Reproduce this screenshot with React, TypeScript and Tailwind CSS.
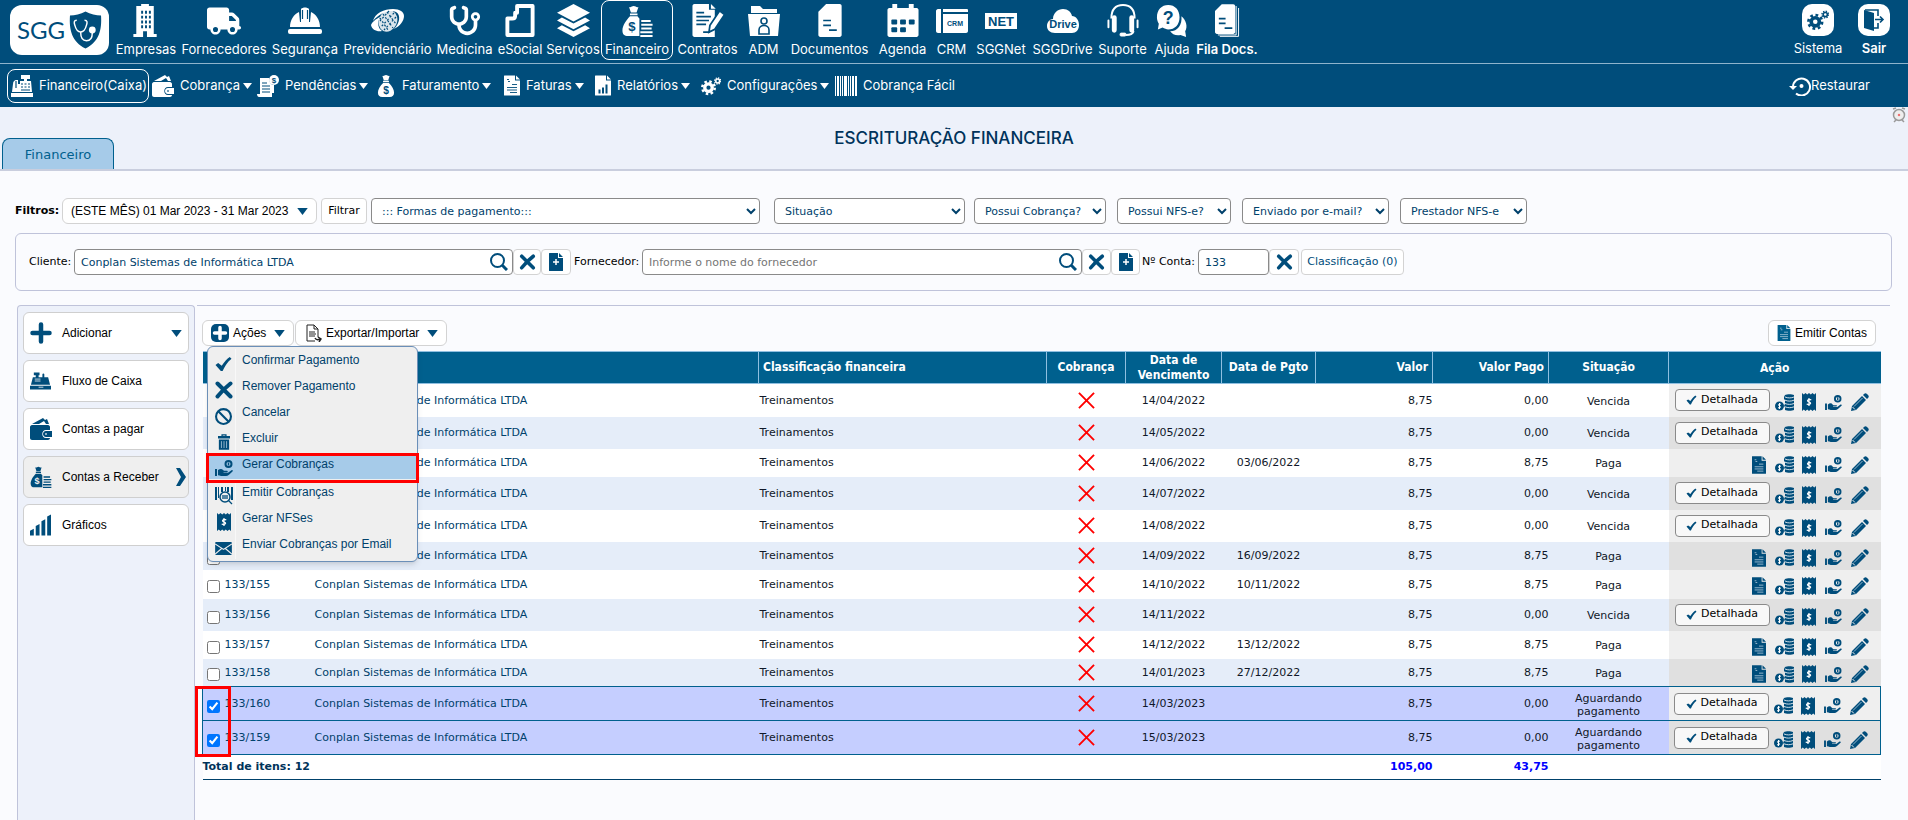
import React, { useState } from "react";
import { FaBan, FaStethoscope, FaTruck } from "react-icons/fa6";

type IconProps = { className?: string };

/* ---------- Icons ---------- */

function BuildingIcon({ className }: IconProps) {
  return (
    <svg viewBox="0 0 28 34" className={className} fill="currentColor">
      <path
        fillRule="evenodd"
        d="M6 2h3V0h8v2h5v29h3v3H15v-6h-4v6H1v-3h3V2zM9 7v3h2V7zm4 0v3h2V7zm4 0v3h2V7zM9 12v3h2v-3zm4 0v3h2v-3zm4 0v3h2v-3zM9 17v3h2v-3zm4 0v3h2v-3zm4 0v3h2v-3zM9 22v3h2v-3zm4 0v3h2v-3zm4 0v3h2v-3z"
      />
    </svg>
  );
}

function HelmetIcon({ className }: IconProps) {
  return (
    <svg viewBox="0 0 34 28" className={className} fill="currentColor">
      <path d="M2 20c0-7 4-13 9-15l1 10h1V2c2-2 6-2 8 0v13h1l1-10c5 2 9 8 9 15z" />
      <path d="M14.500 3v9M19.500 3v9" stroke="#004d7b" strokeWidth="1.200" />
      <rect y="22" width="34" height="5" rx="2" />
    </svg>
  );
}

function SocialSecurityIcon({ className }: IconProps) {
  return (
    <svg viewBox="0 0 34 24" className={className} fill="currentColor">
      <path d="M2 12C4 4 13 0 22 0c7 0 11 3 11 7 0 5-4 10-10 13 6-6 7-14 2-17C18 0 8 5 2 12z" />
      <path d="M0 16c1 5 6 7 11 6-4-3-5-8-2-14-4 2-8 5-9 8z" />
      <ellipse cx="17" cy="12" rx="9" ry="11" transform="rotate(25 17 12)" opacity="0.85" />
      <g stroke="#004d7b" strokeWidth="1.2" strokeDasharray="2 2" fill="none">
        <path d="M12 5l10 14M16 3l9 12M9 9l8 12M23 4L10 18M25 8L13 21M18 2L9 12" />
      </g>
    </svg>
  );
}

function ESocialIcon({ className }: IconProps) {
  return (
    <svg viewBox="0 0 30 34" className={className} fill="none" stroke="currentColor" strokeWidth="4">
      <path d="M12 2h16v30H2V15h5c2 0 3-1 3-3V9h2z" strokeLinejoin="round" />
    </svg>
  );
}

function LayersIcon({ className }: IconProps) {
  return (
    <svg viewBox="0 0 34 34" className={className} fill="currentColor">
      <path d="M17 0l17 9-17 9L0 9zM5 14l12 6 12-6 5 3-17 9-17-9zM5 22l12 6 12-6 5 3-17 9-17-9z" />
    </svg>
  );
}

function GearsIcon({ className }: IconProps) {
  return (
    <svg viewBox="0 0 24 22" className={className} fill="none" stroke="currentColor">
      <circle cx="9" cy="13" r="4.500" strokeWidth="4" />
      <circle cx="9" cy="13" r="7.500" strokeWidth="3" strokeDasharray="3 2.890" />
      <circle cx="20" cy="5" r="2.300" strokeWidth="1.800" />
      <circle cx="20" cy="5" r="3.700" strokeWidth="1.500" strokeDasharray="1.500 1.406" />
    </svg>
  );
}

function MoneyBagIcon({ className }: IconProps) {
  return (
    <svg viewBox="0 0 22 30" className={className} fill="currentColor">
      <path d="M6 1c2 1 3-1 5-1s3 2 5 1l-2 6H8zM7 8h8v2H7zM7 11h8c4 4 7 9 7 13 0 4-2 6-6 6H6c-4 0-6-2-6-6 0-4 3-9 7-13z" />
      <text x="11" y="26" fontSize="14" fontWeight="700" textAnchor="middle" fill="#004d7b" fontFamily="Liberation Sans, sans-serif">
        $
      </text>
    </svg>
  );
}

function BagCoinsIcon({ className, mark = "#004d7b" }: IconProps & { mark?: string }) {
  return (
    <svg viewBox="0 0 32 34" className={className} fill="currentColor">
      <path d="M7 2c2 1 3-1 5-1s3 2 5 1l-2 6H9zM8 9h8v2H8zM8 12h8l4 5v16H6c-4 0-6-2-6-6 0-5 4-11 8-15z" />
      <text x="10" y="28" fontSize="14" fontWeight="700" textAnchor="middle" fill={mark} fontFamily="Liberation Sans, sans-serif">
        $
      </text>
      <path d="M18 15h14v19H18z" fill={mark} />
      <path d="M20 16h10v2H20zM20 20h12v2H20zM20 24h11v2H20zM19 28h13v2H19zM19 32h13v2H19z" />
    </svg>
  );
}

function ContractIcon({ className }: IconProps) {
  return (
    <svg viewBox="0 0 32 34" className={className} fill="currentColor">
      <path d="M2 0h15v6h6v28H2C1 34 0 33 0 32V2c0-1 1-2 2-2zM19 0l5 5h-5z" />
      <path d="M4 9h8M4 13h15M4 17h13M4 21h10M11 29h7" stroke="#004d7b" strokeWidth="1.8" />
      <path d="M28 7l5 4-10 15-6 3 1-7z" stroke="#004d7b" strokeWidth="1.8" />
    </svg>
  );
}

function FolderUserIcon({ className }: IconProps) {
  return (
    <svg viewBox="0 0 32 30" className={className} fill="currentColor">
      <path d="M3 0h9l3 3h14v4H3zM0 8h32l-2 22H2z" />
      <g fill="none" stroke="#004d7b" strokeWidth="1.6">
        <circle cx="16" cy="15" r="3" />
        <path d="M11 28v-4c0-6 10-6 10 0v4z" />
      </g>
    </svg>
  );
}

function DocumentIcon({ className }: IconProps) {
  return (
    <svg viewBox="0 0 24 34" className={className} fill="currentColor">
      <path d="M8 0h14c1 0 2 1 2 2v30c0 1-1 2-2 2H2c-1 0-2-1-2-2V8z" />
      <path d="M5 17h8M5 22h8M11 27h8" stroke="#004d7b" strokeWidth="1.8" />
    </svg>
  );
}

function CalendarIcon({ className }: IconProps) {
  return (
    <svg viewBox="0 0 32 34" className={className} fill="currentColor">
      <path d="M5 0h5v4h12V0h5v4h3c1 0 2 1 2 2v26c0 1-1 2-2 2H2c-1 0-2-1-2-2V6c0-1 1-2 2-2h3z" />
      <g fill="#004d7b">
        <rect x="4" y="16" width="6" height="5" rx="1" />
        <rect x="13" y="16" width="6" height="5" rx="1" />
        <rect x="22" y="16" width="6" height="5" rx="1" />
        <rect x="4" y="24" width="6" height="5" rx="1" />
        <rect x="13" y="24" width="6" height="5" rx="1" />
      </g>
    </svg>
  );
}

function CrmIcon({ className }: IconProps) {
  return (
    <svg viewBox="0 0 32 24" className={className} fill="currentColor">
      <path d="M2 0h3v24H2c-1 0-2-1-2-2V2c0-1 1-2 2-2zM7 0h24c1 0 1 1 1 1v2H7zM7 5h25v17c0 1-1 2-2 2H7z" />
      <text x="19" y="17" fontSize="7" fontWeight="700" textAnchor="middle" fill="#004d7b" fontFamily="Liberation Sans, sans-serif">
        CRM
      </text>
    </svg>
  );
}

function NetIcon({ className }: IconProps) {
  return (
    <svg viewBox="0 0 32 16" className={className} fill="currentColor">
      <rect width="32" height="16" />
      <text x="16" y="13" fontSize="13" fontWeight="700" textAnchor="middle" fill="#004d7b" fontFamily="Liberation Sans, sans-serif">
        NET
      </text>
    </svg>
  );
}

function DriveIcon({ className }: IconProps) {
  return (
    <svg viewBox="0 0 32 24" className={className} fill="currentColor">
      <path d="M8 24c-5 0-8-3-8-7s3-7 6-7c0-6 5-10 10-10s8 3 9 7c4 0 7 4 7 9 0 5-3 8-7 8z" />
      <text x="16" y="19" fontSize="11" fontWeight="700" textAnchor="middle" fill="#004d7b" fontFamily="Liberation Sans, sans-serif">
        Drive
      </text>
    </svg>
  );
}

function HeadsetIcon({ className }: IconProps) {
  return (
    <svg viewBox="0 0 34 34" className={className} fill="none" stroke="currentColor">
      <path d="M5 15C5 5 10 1 17 1s12 4 12 14" strokeWidth="2" />
      <path d="M8 14v13M26 14v13" strokeWidth="5" strokeLinecap="round" />
      <path d="M2 17v7M32 17v7" strokeWidth="2" strokeLinecap="round" />
      <path d="M28 28c-1 3-4 4-8 4" strokeWidth="2" />
      <rect x="14" y="30" width="6" height="3" rx="1" fill="currentColor" />
    </svg>
  );
}

function HelpIcon({ className }: IconProps) {
  return (
    <svg viewBox="0 0 32 34" className={className} fill="currentColor">
      <path d="M26 12c5 4 7 11 4 16l1 6-6-2c-5 1-9-1-11-4 8 0 13-7 12-16z" />
      <path d="M12 0c7 0 12 5 12 13s-5 13-12 13c-2 0-4-1-6-2l-5 2 1-6c-1-2-2-4-2-7C0 5 5 0 12 0z" />
      <text x="12" y="20" fontSize="19" fontWeight="700" textAnchor="middle" fill="#004d7b" fontFamily="Liberation Sans, sans-serif">
        ?
      </text>
    </svg>
  );
}

function DocsQueueIcon({ className }: IconProps) {
  return (
    <svg viewBox="0 0 26 34" className={className} fill="currentColor">
      <path d="M7 0h12c1 0 2 1 2 2v27c0 1-1 2-2 2H2c-1 0-2-1-2-2V7z" />
      <path d="M22 2v30H3M24.500 4v29.500H5" fill="none" stroke="currentColor" />
      <path d="M4 15h7M4 20h7M10 25h8" stroke="#004d7b" strokeWidth="1.8" />
    </svg>
  );
}

function CashRegisterIcon({ className }: IconProps) {
  return (
    <svg viewBox="0 0 22 22" className={className} fill="currentColor">
      <path d="M10 0h9v4h-3v2h4l1 11H1l1-8c0-3 2-4 3-4h2v4h2V6h4V4h-3zM0 18h22v4H0z" />
      <path d="M5 6v7M10 9h2M13.500 9h2M17 9h2M10 12h2M13.500 12h2M17 12h2M10 15h9" stroke="#004d7b" strokeWidth="1.2" />
    </svg>
  );
}

function TillIcon({ className }: IconProps) {
  return (
    <svg viewBox="0 0 22 18" className={className} fill="currentColor">
      <path d="M4 0h6v3H9v2h4V2c0-1 2-1 2 0v3h4l2 8H1l2-8h3V3H4zM0 14h22v4H0z" />
      <path d="M5 7h6M5 9h6M9 15.500h5" stroke="#fff" strokeWidth="0.800" />
    </svg>
  );
}

function WalletIcon({ className }: IconProps) {
  return (
    <svg viewBox="0 0 22 22" className={className} fill="currentColor">
      <path d="M2 6L13 0l2 2 2-1 2 5h-3l-2-3-5 3z" />
      <path d="M2 7h16c1 0 2 1 2 2v3h-4c-5 0-5 8 0 8h4c0 1-1 2-2 2H2c-1 0-2-1-2-2V9c0-1 1-2 2-2z" />
      <path d="M16 13h6v6h-6c-4 0-4-6 0-6zm0 2c-1 0-1 2 0 2s1-2 0-2z" fillRule="evenodd" />
    </svg>
  );
}

function PendingIcon({ className }: IconProps) {
  return (
    <svg viewBox="0 0 22 22" className={className} fill="currentColor">
      <path d="M3 3h9c0 4 2 7 5 7v8h-2v4H2c-1 0-2-1-2-3h3z" />
      <circle cx="17" cy="5" r="5" />
      <path d="M5 8h5M5 11h8M5 14h8M5 17h8" stroke="#004d7b" />
      <text x="17" y="8" fontSize="8" fontWeight="700" textAnchor="middle" fill="#004d7b" fontFamily="Liberation Sans, sans-serif">
        $
      </text>
    </svg>
  );
}

function InvoiceIcon({ className, mark = "#b8d0e0" }: IconProps & { mark?: string }) {
  return (
    <svg viewBox="0 0 16 20" className={className} fill="currentColor">
      <path d="M1 0h10v5h5v14c0 1 0 1-1 1H1c-1 0-1 0-1-1V1c0-1 0-1 1-1zM12 0l4 4h-4z" />
      <path d="M3 4h2M4 6h2M8 9h5M3 12h10M3 14.500h10M6 17h7" stroke={mark} strokeWidth="0.900" />
    </svg>
  );
}

function ReportIcon({ className }: IconProps) {
  return (
    <svg viewBox="0 0 16 20" className={className} fill="currentColor">
      <path d="M1 0h10v5h5v14c0 1 0 1-1 1H1c-1 0-1 0-1-1V1c0-1 0-1 1-1zM12 0l4 4h-4z" />
      <path d="M4.500 18v-4M8 18v-6M11.500 18V9" stroke="#004d7b" strokeWidth="2" />
    </svg>
  );
}

function BarcodeIcon({ className }: IconProps) {
  return (
    <svg viewBox="0 0 22 20" className={className} fill="currentColor">
      <path d="M0 0h1v20H0zM2 0h2v20H2zM5 0h1v20H5zM7 0h1v20H7zM9 0h3v20H9zM13 0h1v20h-1zM15 0h1v20h-1zM17 0h2v20h-2zM20 0h2v20h-2z" />
    </svg>
  );
}

function RestoreIcon({ className }: IconProps) {
  return (
    <svg viewBox="0 0 22 20" className={className} fill="none" stroke="currentColor" strokeWidth="2">
      <path d="M4 11a8.500 8.500 0 1 1 3 6.500" />
      <path d="M0 10h8l-4 4z" fill="currentColor" stroke="none" />
      <circle cx="12.500" cy="10" r="2" fill="currentColor" stroke="none" />
    </svg>
  );
}

function ExitIcon({ className }: IconProps) {
  return (
    <svg viewBox="0 0 22 22" className={className} fill="currentColor">
      <path d="M1 1l10 3v18L1 19z" />
      <path d="M2 1h13v6M15 14v5h-4M12 10.500h8M17 7.500l3 3-3 3" fill="none" stroke="currentColor" strokeWidth="1.600" />
    </svg>
  );
}

function ClockIcon({ className }: IconProps) {
  return (
    <svg viewBox="0 0 14 16" className={className} fill="none" stroke="#9a9a9a">
      <path d="M1 2l3-1M13 2l-3-1M2 15l2-2M12 15l-2-2" strokeWidth="1.500" />
      <circle cx="7" cy="8" r="5.500" fill="#eee" strokeWidth="1.500" />
      <circle cx="7" cy="8" r="0.800" fill="#e33" stroke="#e66" />
    </svg>
  );
}

function PlusIcon({ className }: IconProps) {
  return (
    <svg viewBox="0 0 22 22" className={className} fill="none" stroke="currentColor" strokeWidth="4.500" strokeLinecap="round">
      <path d="M11 2.500v17M2.500 11h17" />
    </svg>
  );
}

function CheckIcon({ className }: IconProps) {
  return (
    <svg viewBox="0 0 18 18" className={className} fill="currentColor">
      <path d="M0 10l3-2 4 3c3-5 6-8 9-10l2 2C13 7 10 12 8 17H6z" />
    </svg>
  );
}

function CrossIcon({ className }: IconProps) {
  return (
    <svg viewBox="0 0 18 18" className={className} fill="none" stroke="currentColor" strokeWidth="4" strokeLinecap="round">
      <path d="M2.500 2.500c3 3 8 8 13 13M15.500 2.500C11 6 6 11 2.500 15.500" />
    </svg>
  );
}

function TrashIcon({ className }: IconProps) {
  return (
    <svg viewBox="0 0 14 18" className={className} fill="currentColor">
      <path d="M4 0h6v2h4v3H0V2h4zM5.500 1.500V2h3v-.5zM1 6h12v12H1z" fillRule="evenodd" />
      <path d="M4 8v8M7 8v8M10 8v8" stroke="#b8d0e0" strokeWidth="0.900" />
    </svg>
  );
}

function MailIcon({ className }: IconProps) {
  return (
    <svg viewBox="0 0 18 14" className={className}>
      <rect width="18" height="14" rx="1" fill="currentColor" />
      <path d="M0 2l9 6 9-6M0 13l7-6M18 13l-7-6" fill="none" stroke="#efefef" strokeWidth="1.200" />
    </svg>
  );
}

function RedCrossIcon({ className }: IconProps) {
  return (
    <svg viewBox="0 0 18 18" className={className} fill="none" stroke="#ff0000" strokeWidth="2">
      <path d="M1 1l16 16M17 1L1 17" />
    </svg>
  );
}

function SearchIcon({ className }: IconProps) {
  return (
    <svg viewBox="0 0 18 18" className={className} fill="none" stroke="currentColor" strokeWidth="2">
      <circle cx="7.500" cy="7.500" r="6.500" />
      <path d="M12 12l5 5" strokeWidth="3" />
    </svg>
  );
}

function NewDocIcon({ className }: IconProps) {
  return (
    <svg viewBox="0 0 14 18" className={className} fill="currentColor">
      <path d="M1 0h8v5h5v12c0 1 0 1-1 1H1c-1 0-1 0-1-1V1c0-1 0-1 1-1zM10 0l4 4h-4z" />
      <path d="M7 6v6M4 9h6" stroke="#fff" strokeWidth="1.500" />
    </svg>
  );
}

function PlusBoxIcon({ className }: IconProps) {
  return (
    <svg viewBox="0 0 18 18" className={className}>
      <rect width="18" height="18" rx="5" fill="currentColor" />
      <path d="M9 3.500v11M3.500 9h11" stroke="#fff" strokeWidth="3.500" strokeLinecap="round" />
    </svg>
  );
}

function ExportIcon({ className }: IconProps) {
  return (
    <svg viewBox="0 0 16 18" className={className} fill="none" stroke="#222">
      <path d="M9 17H1V1h7l4 4v8M8 1v4h4M3 8h6M3 10h7M3 12h6" />
      <path d="M9 14c1 2 3 2 5 1M12 13l3 2-2 3" strokeWidth="1.500" />
    </svg>
  );
}

function BarsIcon({ className }: IconProps) {
  return (
    <svg viewBox="0 0 22 22" className={className} fill="currentColor">
      <path d="M0 17l4-2v7H0zM6 12l4-2v12H6zM12 7l4-2v17h-4zM18 2l4-2v22h-4z" />
    </svg>
  );
}

function HandCoinIcon({ className }: IconProps) {
  return (
    <svg viewBox="0 0 18 16" className={className} fill="currentColor">
      <path d="M0 9h2v7H0zM3 10c2-1.500 4-1.500 5 0l1 .8h3c1 0 1 1.400 0 1.400H8.500v.6H13l3.500-2.600c1-.5 1.800.5 1 1.300L14 14.700c-1 .9-2 1.300-3 1.300H6c-1 0-2-.7-3-.7z" />
      <circle cx="13.500" cy="4" r="3" fill="none" stroke="currentColor" strokeWidth="2" />
      <path d="M13.500 2.500v3" stroke="currentColor" strokeWidth="1.400" />
    </svg>
  );
}

function CoinStackIcon({ className }: IconProps) {
  return (
    <svg viewBox="0 0 19 17" className={className} fill="currentColor">
      <circle cx="4.500" cy="12" r="4.500" />
      <path d="M6 10.300c-2.300-1-3.500 1-1.500 1.700s1 2.600-1.500 1.700M4.500 9v6" stroke="#fff" fill="none" strokeWidth="1" />
      <path d="M10 1c2-1 7-1 9 0v15c-2 1-7 1-9 0v-3l-1-1 1-2V6L9 5V3z" />
      <path d="M10 3c3 1.200 6 1.200 9 0M10 6.200c3 1.200 6 1.200 9 0M10 9.500c3 1.200 6 1.200 9 0M10 12.800c3 1.200 6 1.200 9 0" stroke="#e8eef3" strokeWidth="0.900" fill="none" />
    </svg>
  );
}

function ReceiptIcon({ className }: IconProps) {
  return (
    <svg viewBox="0 0 14 18" className={className} fill="currentColor">
      <path d="M0 0l1.750 1.500L3.500 0l1.750 1.500L7 0l1.750 1.500L10.500 0l1.750 1.500L14 0v18l-1.750-1.500L10.500 18l-1.750-1.500L7 18l-1.750-1.500L3.500 18l-1.750-1.500L0 18z" />
      <path d="M9.300 7c-3-1.500-5.500 1.100-2.300 2s1 3.500-2.300 2M7 5v8" stroke="#fff" fill="none" strokeWidth="1.200" />
    </svg>
  );
}

function PencilIcon({ className }: IconProps) {
  return (
    <svg viewBox="0 0 18 18" className={className} fill="currentColor">
      <path d="M13 1c1-1 2-1 3 0l1 1c1 1 1 2 0 3l-1 1-4-4zM11 3l4 4L5 17l-5 1 1-5z" />
      <path d="M11.500 5L3 13.500" stroke="#b8d0e0" strokeWidth="0.800" />
      <path d="M1.500 14l2.500 2.500" stroke="#efefef" />
    </svg>
  );
}

function BarcodeSearchIcon({ className }: IconProps) {
  return (
    <svg viewBox="0 0 18 18" className={className} fill="currentColor">
      <path d="M0 0h2v13H0zM3 0h1v11H3zM6 0h2v5H6zM10 0h1v4h-1zM12 0h2v5h-2zM16 0h2v13h-2z" />
      <circle cx="10" cy="10" r="5" fill="none" stroke="currentColor" strokeWidth="1.500" />
      <path d="M8 8v4M10 8v4M12 8v4M13.500 13.500L17 17" stroke="currentColor" strokeWidth="1.300" />
    </svg>
  );
}

function Caret({ className = "" }: IconProps) {
  return (
    <svg viewBox="0 0 12 8" className={`shrink-0 ${className}`} fill="currentColor">
      <path d="M0 0h12L6 8z" />
    </svg>
  );
}

function Logo() {
  return (
    <a href="#" className="flex h-[50px] w-[99px] items-center justify-center gap-1 rounded-xl bg-white">
      <span className="font-[Lato,sans-serif] text-2xl text-[#004d7b]">SGG</span>
      <svg viewBox="0 0 34 38" className="h-[38px] w-[33px]">
        <path d="M17 0c5 3 11 4 16 4 1 15-2 27-16 34C3 31 0 19 1 4 6 4 12 3 17 0z" fill="#004d7b" />
        <g fill="none" stroke="#fff" strokeWidth="1.500">
          <path d="M8 9c-3 0-3 2-2 5 1 4 3 7 6 7s5-3 6-7c1-3 1-5-2-5" />
          <path d="M12 21c0 6 2 9 6 9s6-3 6-8" />
        </g>
        <circle cx="24" cy="19" r="3.500" fill="#fff" />
      </svg>
    </a>
  );
}

/* ---------- Data ---------- */

const modules = [
  { label: "Empresas", width: "w-[66px]", icon: <BuildingIcon className="h-[33px] w-7" /> },
  { label: "Fornecedores", width: "w-[90px]", icon: <FaTruck className="h-7 w-[34px]" /> },
  { label: "Segurança", width: "w-[72px]", icon: <HelmetIcon className="h-7 w-[34px]" /> },
  { label: "Previdenciário", width: "w-[93px]", icon: <SocialSecurityIcon className="h-6 w-[34px]" /> },
  { label: "Medicina", width: "w-[61px]", icon: <FaStethoscope className="h-[33px] w-[33px]" /> },
  { label: "eSocial", width: "w-[50px]", icon: <ESocialIcon className="h-[33px] w-[30px]" /> },
  { label: "Serviços", width: "w-[56px]", icon: <LayersIcon className="h-[33px] w-[33px]" /> },
  { label: "Financeiro", width: "w-[72px]", icon: <BagCoinsIcon className="h-8 w-[31px]" />, active: true },
  { label: "Contratos", width: "w-[69px]", icon: <ContractIcon className="h-[33px] w-8" /> },
  { label: "ADM", width: "w-[43px]", icon: <FolderUserIcon className="h-[30px] w-8" /> },
  { label: "Documentos", width: "w-[89px]", icon: <DocumentIcon className="h-[33px] w-6" /> },
  { label: "Agenda", width: "w-[57px]", icon: <CalendarIcon className="h-[33px] w-8" /> },
  { label: "CRM", width: "w-[41px]", icon: <CrmIcon className="h-6 w-8" /> },
  { label: "SGGNet", width: "w-[58px]", icon: <NetIcon className="h-4 w-8" /> },
  { label: "SGGDrive", width: "w-[65px]", icon: <DriveIcon className="h-6 w-8" /> },
  { label: "Suporte", width: "w-[55px]", icon: <HeadsetIcon className="h-[33px] w-[34px]" /> },
  { label: "Ajuda", width: "w-[44px]", icon: <HelpIcon className="h-8 w-8" /> },
  { label: "Fila Docs.", width: "w-[66px]", icon: <DocsQueueIcon className="h-[33px] w-[25px]" />, bold: true },
];

const submenus = [
  { label: "Cobrança", width: "w-[105px]", icon: <WalletIcon className="h-[22px] w-[22px]" />, caret: true },
  { label: "Pendências", width: "w-[119px]", icon: <PendingIcon className="h-[22px] w-[22px]" />, caret: true },
  { label: "Faturamento", width: "w-32", icon: <MoneyBagIcon className="h-[22px] w-5" />, caret: true },
  { label: "Faturas", width: "w-[91px]", icon: <InvoiceIcon className="h-[21px] w-4" mark="#004d7b" />, caret: true },
  { label: "Relatórios", width: "w-[106px]", icon: <ReportIcon className="h-[21px] w-4" />, caret: true },
  { label: "Configurações", width: "w-[134px]", icon: <GearsIcon className="h-5 w-5" />, caret: true },
  { label: "Cobrança Fácil", width: "w-32", icon: <BarcodeIcon className="h-5 w-[22px]" /> },
];

const sideItems = [
  { label: "Adicionar", icon: <PlusIcon className="h-[22px] w-[22px]" />, caret: true },
  { label: "Fluxo de Caixa", icon: <TillIcon className="h-[18px] w-[21px]" /> },
  { label: "Contas a pagar", icon: <WalletIcon className="h-[22px] w-[22px]" /> },
  { label: "Contas a Receber", icon: <BagCoinsIcon className="h-[22px] w-[22px]" mark="#efefef" />, active: true },
  { label: "Gráficos", icon: <BarsIcon className="h-[22px] w-[21px]" /> },
];

const menuItems = [
  { label: "Confirmar Pagamento", icon: <CheckIcon className="h-4 w-[17px]" /> },
  { label: "Remover Pagamento", icon: <CrossIcon className="h-[18px] w-[18px]" /> },
  { label: "Cancelar", icon: <FaBan className="h-[17px] w-[17px]" /> },
  { label: "Excluir", icon: <TrashIcon className="h-[18px] w-3" /> },
  { label: "Gerar Cobranças", icon: <HandCoinIcon className="h-4 w-[18px]" />, highlighted: true },
  { label: "Emitir Cobranças", icon: <BarcodeSearchIcon className="h-[18px] w-[18px]" /> },
  { label: "Gerar NFSes", icon: <ReceiptIcon className="h-[18px] w-[14px]" /> },
  { label: "Enviar Cobranças por Email", icon: <MailIcon className="h-[13px] w-[17px]" /> },
];

interface Entry {
  id?: string;
  due: string;
  paidOn?: string;
  paid: string;
  status: "Vencida" | "Paga" | "Aguardando pagamento";
  height: string;
}

const entries: Entry[] = [
  { due: "14/04/2022", paid: "0,00", status: "Vencida", height: "h-[33px]" },
  { due: "14/05/2022", paid: "0,00", status: "Vencida", height: "h-8" },
  { due: "14/06/2022", paidOn: "03/06/2022", paid: "8,75", status: "Paga", height: "h-7" },
  { due: "14/07/2022", paid: "0,00", status: "Vencida", height: "h-[33px]" },
  { due: "14/08/2022", paid: "0,00", status: "Vencida", height: "h-8" },
  { due: "14/09/2022", paidOn: "16/09/2022", paid: "8,75", status: "Paga", height: "h-7" },
  { id: "133/155", due: "14/10/2022", paidOn: "10/11/2022", paid: "8,75", status: "Paga", height: "h-[29px]" },
  { id: "133/156", due: "14/11/2022", paid: "0,00", status: "Vencida", height: "h-8" },
  { id: "133/157", due: "14/12/2022", paidOn: "13/12/2022", paid: "8,75", status: "Paga", height: "h-7" },
  { id: "133/158", due: "14/01/2023", paidOn: "27/12/2022", paid: "8,75", status: "Paga", height: "h-7" },
  { id: "133/160", due: "14/03/2023", paid: "0,00", status: "Aguardando pagamento", height: "h-[34px]" },
  { id: "133/159", due: "15/03/2023", paid: "0,00", status: "Aguardando pagamento", height: "h-[34px]" },
];

/* ---------- Header ---------- */

function Header() {
  return (
    <header className="bg-[#004d7b] font-[Inter,sans-serif] text-[13px] text-white">
      <div className="flex h-16 items-start border-b border-[#8fb4cc] pl-2.5">
        <div className="pt-[5px]">
          <Logo />
        </div>
        <nav className="ml-1 flex">
          {modules.map((m) => (
            <a
              key={m.label}
              href="#"
              className={`flex h-[60px] shrink-0 flex-col items-center rounded-lg border pt-[3px] whitespace-nowrap ${m.width} ${
                m.active ? "border-white" : "border-transparent"
              } ${m.bold ? "font-semibold" : ""}`}
            >
              <span className="flex h-[33px] items-center">{m.icon}</span>
              <span className="mt-1 leading-4">{m.label}</span>
            </a>
          ))}
        </nav>
        <div className="mr-[19px] ml-auto flex gap-[13px] pt-1">
          <a href="#" className="flex w-[56px] flex-col items-center">
            <span className="flex h-8 w-8 items-center justify-center rounded-[10px] bg-white text-[#004d7b]">
              <GearsIcon className="h-5 w-[22px]" />
            </span>
            <span className="mt-1 leading-4">Sistema</span>
          </a>
          <a href="#" className="flex w-[30px] flex-col items-center font-semibold">
            <span className="flex h-8 w-8 items-center justify-center rounded-[10px] bg-white text-[#004d7b]">
              <ExitIcon className="h-[22px] w-[22px]" />
            </span>
            <span className="mt-1 leading-4">Sair</span>
          </a>
        </div>
      </div>
      <div className="flex h-[43px] items-center pl-[7px]">
        <a href="#" className="mr-[3px] flex h-[34px] w-[142px] items-center gap-1.5 rounded-lg border border-white pl-[3px]">
          <CashRegisterIcon className="h-[22px] w-[22px] shrink-0" />
          Financeiro(Caixa)
        </a>
        {submenus.map((s) => (
          <a key={s.label} href="#" className={`flex shrink-0 items-center whitespace-nowrap ${s.width}`}>
            {s.icon}
            <span className="ml-1.5">{s.label}</span>
            {s.caret && <Caret className="ml-[3px] h-1.5 w-[9px]" />}
          </a>
        ))}
        <a href="#" className="mr-[38px] ml-auto flex items-center">
          <RestoreIcon className="h-5 w-[22px]" />
          Restaurar
        </a>
      </div>
    </header>
  );
}

/* ---------- Filters ---------- */

const selectClass =
  "h-[26px] rounded border border-[#8a8a8a] bg-white pr-1 pl-1.5 text-[11px] text-[#00416b]";
const iconButton =
  "flex h-[26px] items-center justify-center rounded border border-[#d3d3d3] bg-white text-[#004d7b]";

function Filters() {
  return (
    <>
      <div className="mt-[27px] flex items-center pl-[15px] text-[11px] text-black">
        <span className="w-[47px] font-bold">Filtros:</span>
        <button className="flex h-[26px] w-[255px] items-center justify-between rounded-md border border-[#d3d3d3] bg-white px-2 font-['Liberation_Sans',sans-serif] text-[12px]">
          (ESTE MÊS) 01 Mar 2023 - 31 Mar 2023
          <Caret className="h-[7px] w-[11px] text-[#004d7b]" />
        </button>
        <button className="ml-1 h-[26px] w-[46px] rounded border border-[#d3d3d3] bg-white">Filtrar</button>
        <select aria-label="Formas de pagamento" className={`${selectClass} ml-1 w-[389px]`}>
          <option>::: Formas de pagamento:::</option>
        </select>
        <select aria-label="Situação" className={`${selectClass} ml-[14px] w-[191px]`}>
          <option>Situação</option>
        </select>
        <select aria-label="Possui Cobrança?" className={`${selectClass} ml-[9px] w-[132px]`}>
          <option>Possui Cobrança?</option>
        </select>
        <select aria-label="Possui NFS-e?" className={`${selectClass} ml-[11px] w-[114px]`}>
          <option>Possui NFS-e?</option>
        </select>
        <select aria-label="Enviado por e-mail?" className={`${selectClass} ml-[11px] w-[147px]`}>
          <option>Enviado por e-mail?</option>
        </select>
        <select aria-label="Prestador NFS-e" className={`${selectClass} ml-[11px] w-[127px]`}>
          <option>Prestador NFS-e</option>
        </select>
      </div>

      <div className="mt-[9px] mr-4 ml-[15px] flex h-[58px] items-center rounded-md border border-[#bfc3da] pl-[13px] text-[11px] text-black">
        <label htmlFor="cliente" className="w-[45px]">
          Cliente:
        </label>
        <div className="relative w-[439px]">
          <input
            id="cliente"
            defaultValue="Conplan Sistemas de Informática LTDA"
            className="h-[26px] w-full rounded border border-[#8a8a8a] bg-white pr-7 pl-1.5 text-[#00416b]"
          />
          <button aria-label="Pesquisar cliente" className="absolute top-1 right-[5px] text-[#004d7b]">
            <SearchIcon className="h-[18px] w-[18px]" />
          </button>
        </div>
        <button aria-label="Limpar cliente" className={`${iconButton} w-[28px]`}>
          <CrossIcon className="h-4 w-[17px]" />
        </button>
        <button aria-label="Novo cliente" className={`${iconButton} w-[30px]`}>
          <NewDocIcon className="h-[18px] w-[14px]" />
        </button>
        <label htmlFor="fornecedor" className="ml-[3px] w-[68px]">
          Fornecedor:
        </label>
        <div className="relative w-[440px]">
          <input
            id="fornecedor"
            placeholder="Informe o nome do fornecedor"
            className="h-[26px] w-full rounded border border-[#8a8a8a] bg-white pr-7 pl-1.5 placeholder:text-[#757575]"
          />
          <button aria-label="Pesquisar fornecedor" className="absolute top-1 right-[5px] text-[#004d7b]">
            <SearchIcon className="h-[18px] w-[18px]" />
          </button>
        </div>
        <button aria-label="Limpar fornecedor" className={`${iconButton} w-[29px]`}>
          <CrossIcon className="h-4 w-[17px]" />
        </button>
        <button aria-label="Novo fornecedor" className={`${iconButton} w-[29px]`}>
          <NewDocIcon className="h-[18px] w-[14px]" />
        </button>
        <label htmlFor="conta" className="ml-[2px] w-[56px] whitespace-nowrap">
          Nº Conta:
        </label>
        <input
          id="conta"
          defaultValue="133"
          className="h-[26px] w-[71px] rounded border border-[#8a8a8a] bg-white px-1.5 text-[#00416b]"
        />
        <button aria-label="Limpar conta" className={`${iconButton} w-[30px]`}>
          <CrossIcon className="h-4 w-[17px]" />
        </button>
        <button className={`${iconButton} ml-[2px] w-[103px]`}>Classificação (0)</button>
      </div>
    </>
  );
}

/* ---------- Sidebar ---------- */

function Sidebar() {
  return (
    <aside className="w-[178px] shrink-0 rounded-t border border-b-0 border-[#bfc3da] bg-[#edf1fa] px-[5px] pt-1.5">
      <div className="flex flex-col gap-1.5 font-['Liberation_Sans',sans-serif] text-[12px] text-black">
        {sideItems.map((item) => (
          <button
            key={item.label}
            className={`flex h-[42px] items-center rounded-md border border-[#cfcfcf] px-1.5 ${
              item.active ? "bg-[#efefef]" : "bg-white"
            }`}
          >
            <span className="flex w-8 text-[#004d7b]">{item.icon}</span>
            {item.label}
            {item.caret && <Caret className="ml-auto h-[7px] w-[11px] text-[#004d7b]" />}
            {item.active && (
              <svg viewBox="0 0 10 18" className="-mr-1 ml-auto h-[18px] w-2.5 text-[#004d7b]">
                <path d="M0 0h4l6 9-6 9H0l5-9z" fill="currentColor" />
              </svg>
            )}
          </button>
        ))}
      </div>
    </aside>
  );
}

/* ---------- Table ---------- */

function ActionsMenu() {
  return (
    <div className="absolute top-full left-[5px] z-20 w-[211px] rounded-md border border-[#6b8fb8] bg-[#efefef] py-[2px] font-['Liberation_Sans',sans-serif] text-[12px] text-[#00416b] shadow-md">
      {menuItems.map((item) => (
        <button
          key={item.label}
          className={`relative flex h-[26px] w-full items-center text-left ${
            item.highlighted ? "mb-0.5 bg-[#a6cbe9]" : ""
          }`}
        >
          <span
            className={`flex h-full w-7 items-center justify-center pt-1 pl-1 text-[#004d7b] ${
              item.highlighted ? "" : "border-r border-[#f8f8f8]"
            }`}
          >
            {item.icon}
          </span>
          <span className="pb-1 pl-1.5">{item.label}</span>
          {item.highlighted && <span className="absolute -inset-x-0.5 top-0 -bottom-1 z-10 border-[3px] border-[#ff0000]" />}
        </button>
      ))}
    </div>
  );
}

function RowActions({ status }: { status: Entry["status"] }) {
  return (
    <div className="flex items-center justify-end pr-3 text-[#004d7b]">
      {status === "Paga" ? (
        <button aria-label="Recibo" className="mt-1 mr-[9px]">
          <InvoiceIcon className="h-[18px] w-[14px]" />
        </button>
      ) : (
        <button className="mr-[5px] flex h-[22px] w-[95px] items-center justify-center gap-1 rounded border border-[#8a8a8a] bg-[#f8f8f8] text-black">
          <CheckIcon className="h-[10px] w-[11px] text-[#004d7b]" />
          Detalhada
        </button>
      )}
      <div className="mt-1 flex items-center">
        <button aria-label="Parcelas" className="mr-2">
          <CoinStackIcon className="h-[17px] w-[19px]" />
        </button>
        <button aria-label="Gerar NFS-e" className="mr-[9px]">
          <ReceiptIcon className="h-[18px] w-[14px]" />
        </button>
        <button aria-label="Gerar cobrança" className="mr-[9px]">
          <HandCoinIcon className="h-[15px] w-[17px]" />
        </button>
        <button aria-label="Editar">
          <PencilIcon className="h-[18px] w-[18px]" />
        </button>
      </div>
    </div>
  );
}

function EntriesTable() {
  const [selected, setSelected] = useState<string[]>(["14/03/2023", "15/03/2023"]);

  const toggle = (due: string) =>
    setSelected((s) => (s.includes(due) ? s.filter((x) => x !== due) : [...s, due]));

  const th = "border-r border-[#8fbfe0] px-1 leading-[15px] font-bold";

  return (
    <table className="mt-[5px] w-full table-fixed border-collapse text-[11px] text-[#101828]">
      <colgroup>
        <col className="w-[22px]" />
        <col className="w-[90px]" />
        <col />
        <col className="w-[288px]" />
        <col className="w-[79px]" />
        <col className="w-[96px]" />
        <col className="w-[94px]" />
        <col className="w-[117px]" />
        <col className="w-[116px]" />
        <col className="w-[120px]" />
        <col className="w-[212px]" />
      </colgroup>
      <thead>
        <tr className="h-8 border-y border-[#8fbfe0] bg-[#00608e] font-['DejaVu_Sans_Condensed','DejaVu_Sans',sans-serif] text-[12px] text-white">
          <th className="pl-1">
            <input type="checkbox" aria-label="Selecionar todos" className="block h-[13px] w-[13px]" />
          </th>
          <th aria-label="Conta" />
          <th aria-label="Cliente" className={th} />
          <th className={`${th} text-left`}>Classificação financeira</th>
          <th className={th}>Cobrança</th>
          <th className={th}>Data de Vencimento</th>
          <th className={`${th} whitespace-nowrap`}>Data de Pgto</th>
          <th className={`${th} text-right`}>Valor</th>
          <th className={`${th} text-right`}>Valor Pago</th>
          <th className={th}>Situação</th>
          <th className="px-1">Ação</th>
        </tr>
      </thead>
      <tbody>
        {entries.map((e, i) => {
          const checked = selected.includes(e.due);
          const odd = i % 2 === 1;
          return (
            <tr
              key={e.due}
              className={`${e.height} ${
                checked ? "border border-[#00608e] bg-[#c5ceff]" : odd ? "bg-[#e5edf9]" : "bg-white"
              }`}
            >
              <td className="relative pt-[5px] pl-1">
                <input
                  type="checkbox"
                  aria-label={`Selecionar conta com vencimento em ${e.due}`}
                  checked={checked}
                  onChange={() => toggle(e.due)}
                  className="block h-[13px] w-[13px]"
                />
                {e.id === "133/160" && (
                  <span className="pointer-events-none absolute -top-px -left-2 z-10 h-[71px] w-9 border-[3px] border-[#ff0000]" />
                )}
              </td>
              <td className="pt-0.5 text-[#00416b]">{e.id}</td>
              <td className="pt-0.5 text-[#00416b]">Conplan Sistemas de Informática LTDA</td>
              <td className="pt-0.5 pl-px">Treinamentos</td>
              <td>
                <RedCrossIcon className="mx-auto h-[17px] w-[17px]" />
              </td>
              <td className="pt-0.5 text-center">{e.due}</td>
              <td className="pt-0.5 text-center">{e.paidOn}</td>
              <td className="pt-0.5 text-right">8,75</td>
              <td className="pt-0.5 text-right">{e.paid}</td>
              <td className="px-4 pt-0.5 text-center leading-[13px]">{e.status}</td>
              <td className={odd ? "bg-[#e0e0e0]" : "bg-[#efefef]"}>
                <RowActions status={e.status} />
              </td>
            </tr>
          );
        })}
      </tbody>
      <tfoot>
        <tr className="h-[25px] border-b border-[#00416b] bg-white font-bold">
          <td colSpan={7} className="text-[#00335a]">
            Total de itens: 12
          </td>
          <td className="text-right text-[#0000ff]">105,00</td>
          <td className="text-right text-[#0000ff]">43,75</td>
          <td colSpan={2} />
        </tr>
      </tfoot>
    </table>
  );
}

const toolButton = "flex h-[26px] items-center rounded-md border border-[#d3d3d3] bg-white px-2";

function Content() {
  return (
    <main className="mr-[18px] ml-0.5 min-w-0 flex-1 border-t border-[#bfc3da] pt-3.5 pr-[9px] pl-[5px]">
      <div className="flex font-['Liberation_Sans',sans-serif] text-[12px] text-black">
        <div className="relative">
          <button className={`${toolButton} w-[92px]`}>
            <PlusBoxIcon className="mr-1 h-[18px] w-[18px] text-[#004d7b]" />
            Ações
            <Caret className="ml-auto h-[7px] w-[11px] text-[#004d7b]" />
          </button>
          <ActionsMenu />
        </div>
        <button className={`${toolButton} ml-px w-[152px]`}>
          <ExportIcon className="mr-1 ml-0.5 h-[18px] w-4" />
          Exportar/Importar
          <Caret className="ml-auto h-[7px] w-[11px] text-[#004d7b]" />
        </button>
        <button className={`${toolButton} mr-[5px] ml-auto w-[108px] justify-between px-1.5`}>
          <InvoiceIcon className="h-4 w-[14px] text-[#00608e]" />
          Emitir Contas
        </button>
      </div>
      <EntriesTable />
    </main>
  );
}

export default function App() {
  return (
    <div className="flex min-h-screen flex-col bg-[#fafbfe] font-['DejaVu_Sans',sans-serif]">
      <Header />
      <div className="relative flex h-16 items-end border-b-2 border-[#c9cede] bg-[#edf1fa] pl-0.5">
        <button className="h-[31px] w-[112px] rounded-t-lg border border-b-0 border-[#00608e] bg-[#a6cbe9] pt-0.5 text-[13px] text-[#00608e]">
          Financeiro
        </button>
        <h1 className="absolute inset-x-0 top-[19px] text-center font-[Inter,sans-serif] text-[17px] leading-6 font-medium text-[#00335a]">
          ESCRITURAÇÃO FINANCEIRA
        </h1>
        <ClockIcon className="absolute top-0 right-0.5 h-4 w-3.5" />
      </div>
      <Filters />
      <div className="mt-[14px] flex flex-1 pl-[17px]">
        <Sidebar />
        <Content />
      </div>
    </div>
  );
}
